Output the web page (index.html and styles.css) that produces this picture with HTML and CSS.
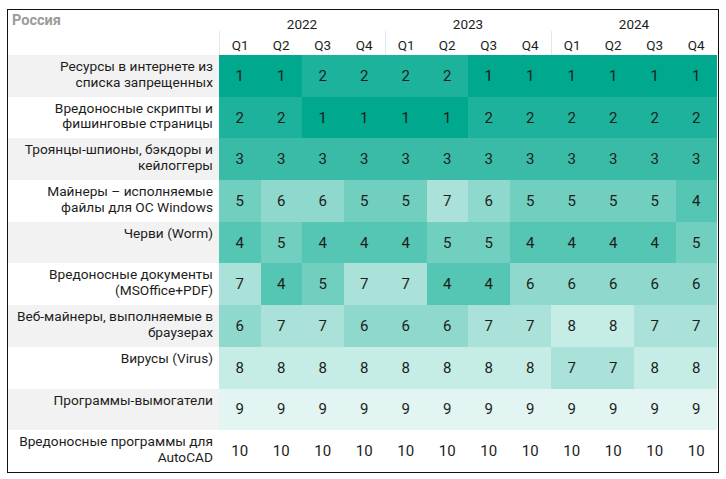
FILE: index.html
```html
<!DOCTYPE html>
<html lang="ru">
<head>
<meta charset="utf-8">
<title>Россия</title>
<link rel="stylesheet" href="styles.css">
</head>
<body>
<div class="frame">
  <div class="grid">
    <div class="country">Россия</div>
    <div class="year">2022</div>
    <div class="year">2023</div>
    <div class="year">2024</div>

    <div class="blank"></div>
    <div class="q sep">Q1</div><div class="q">Q2</div><div class="q">Q3</div><div class="q">Q4</div>
    <div class="q sep">Q1</div><div class="q">Q2</div><div class="q">Q3</div><div class="q">Q4</div>
    <div class="q sep">Q1</div><div class="q">Q2</div><div class="q">Q3</div><div class="q">Q4</div>

    <div class="label alt"><span>Ресурсы в интернете из списка запрещенных</span></div>
    <div class="c v1">1</div><div class="c v1">1</div><div class="c v2">2</div><div class="c v2">2</div><div class="c v2">2</div><div class="c v2">2</div><div class="c v1">1</div><div class="c v1">1</div><div class="c v1">1</div><div class="c v1">1</div><div class="c v1">1</div><div class="c v1">1</div>

    <div class="label"><span>Вредоносные скрипты и фишинговые страницы</span></div>
    <div class="c v2">2</div><div class="c v2">2</div><div class="c v1">1</div><div class="c v1">1</div><div class="c v1">1</div><div class="c v1">1</div><div class="c v2">2</div><div class="c v2">2</div><div class="c v2">2</div><div class="c v2">2</div><div class="c v2">2</div><div class="c v2">2</div>

    <div class="label alt"><span>Троянцы-шпионы, бэкдоры и кейлоггеры</span></div>
    <div class="c v3">3</div><div class="c v3">3</div><div class="c v3">3</div><div class="c v3">3</div><div class="c v3">3</div><div class="c v3">3</div><div class="c v3">3</div><div class="c v3">3</div><div class="c v3">3</div><div class="c v3">3</div><div class="c v3">3</div><div class="c v3">3</div>

    <div class="label"><span>Майнеры – исполняемые файлы для ОС Windows</span></div>
    <div class="c v5">5</div><div class="c v6">6</div><div class="c v6">6</div><div class="c v5">5</div><div class="c v5">5</div><div class="c v7">7</div><div class="c v6">6</div><div class="c v5">5</div><div class="c v5">5</div><div class="c v5">5</div><div class="c v5">5</div><div class="c v4">4</div>

    <div class="label alt"><span>Черви (Worm)</span></div>
    <div class="c v4">4</div><div class="c v5">5</div><div class="c v4">4</div><div class="c v4">4</div><div class="c v4">4</div><div class="c v5">5</div><div class="c v5">5</div><div class="c v4">4</div><div class="c v4">4</div><div class="c v4">4</div><div class="c v4">4</div><div class="c v5">5</div>

    <div class="label"><span>Вредоносные документы (MSOffice+PDF)</span></div>
    <div class="c v7">7</div><div class="c v4">4</div><div class="c v5">5</div><div class="c v7">7</div><div class="c v7">7</div><div class="c v4">4</div><div class="c v4">4</div><div class="c v6">6</div><div class="c v6">6</div><div class="c v6">6</div><div class="c v6">6</div><div class="c v6">6</div>

    <div class="label alt"><span>Веб-майнеры, выполняемые в браузерах</span></div>
    <div class="c v6">6</div><div class="c v7">7</div><div class="c v7">7</div><div class="c v6">6</div><div class="c v6">6</div><div class="c v6">6</div><div class="c v7">7</div><div class="c v7">7</div><div class="c v8">8</div><div class="c v8">8</div><div class="c v7">7</div><div class="c v7">7</div>

    <div class="label"><span>Вирусы (Virus)</span></div>
    <div class="c v8">8</div><div class="c v8">8</div><div class="c v8">8</div><div class="c v8">8</div><div class="c v8">8</div><div class="c v8">8</div><div class="c v8">8</div><div class="c v8">8</div><div class="c v7">7</div><div class="c v7">7</div><div class="c v8">8</div><div class="c v8">8</div>

    <div class="label alt"><span>Программы-вымогатели</span></div>
    <div class="c v9">9</div><div class="c v9">9</div><div class="c v9">9</div><div class="c v9">9</div><div class="c v9">9</div><div class="c v9">9</div><div class="c v9">9</div><div class="c v9">9</div><div class="c v9">9</div><div class="c v9">9</div><div class="c v9">9</div><div class="c v9">9</div>

    <div class="label"><span>Вредоносные программы для AutoCAD</span></div>
    <div class="c v10">10</div><div class="c v10">10</div><div class="c v10">10</div><div class="c v10">10</div><div class="c v10">10</div><div class="c v10">10</div><div class="c v10">10</div><div class="c v10">10</div><div class="c v10">10</div><div class="c v10">10</div><div class="c v10">10</div><div class="c v10">10</div>
  </div>
</div>
</body>
</html>
```
FILE: styles.css
```css
html, body {
  margin: 0;
  padding: 0;
  background: #ffffff;
}
body {
  font-family: Roboto, "Noto Sans", sans-serif;
  color: #1d1d1b;
}
.frame {
  margin: 9px 0 0 7px;
  width: 710px;
  border: 1px solid #111111;
}
.grid {
  display: grid;
  grid-template-columns: 211px repeat(12, 41.5px);
  grid-template-rows: 21px 24px repeat(10, 41.7px);
}
.country {
  font-weight: bold;
  font-size: 14.5px;
  color: #9b9b9b;
  padding: 2px 0 0 4px;
}
.year {
  grid-column: span 4;
  text-align: center;
  font-size: 13.5px;
  padding-top: 6px;
}
.q {
  font-size: 13.5px;
  display: flex;
  align-items: flex-end;
  justify-content: center;
  padding-bottom: 2px;
}
.q.sep {
  border-left: 1px solid #e6e6e6;
}
.label {
  font-size: 13.7px;
  line-height: 15.5px;
  text-align: right;
  padding: 4px 6px 0 8px;
}
.label.alt {
  background: #f2f2f2;
}
.c {
  display: flex;
  align-items: center;
  justify-content: center;
  font-size: 15px;
}
.v1 { background: #00a88e; }
.v2 { background: #1cb29b; }
.v3 { background: #39bba7; }
.v4 { background: #55c5b4; }
.v5 { background: #71cfc0; }
.v6 { background: #8ed8cd; }
.v7 { background: #aae2d9; }
.v8 { background: #c6ece6; }
.v9 { background: #e3f5f2; }
.v10 { background: #ffffff; }
```
